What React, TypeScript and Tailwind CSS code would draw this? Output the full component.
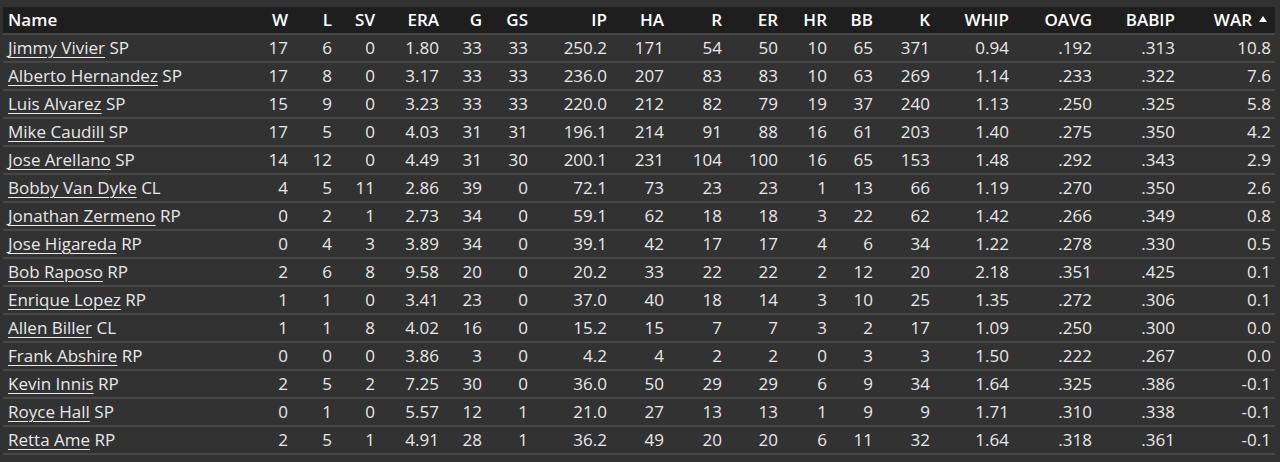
type Row = {
  name: string;
  pos: string;
  stats: string[];
};

const headers = ["W", "L", "SV", "ERA", "G", "GS", "IP", "HA", "R", "ER", "HR", "BB", "K", "WHIP", "OAVG", "BABIP", "WAR"];
const widths = [
  "w-[44px]", "w-[44px]", "w-[43px]", "w-[64px]", "w-[43px]", "w-[46px]", "w-[79px]", "w-[57px]", "w-[58px]",
  "w-[56px]", "w-[49px]", "w-[46px]", "w-[57px]", "w-[79px]", "w-[83px]", "w-[83px]", "w-[96px]",
];

const rows: Row[] = [
  { name: "Jimmy Vivier", pos: "SP", stats: ["17", "6", "0", "1.80", "33", "33", "250.2", "171", "54", "50", "10", "65", "371", "0.94", ".192", ".313", "10.8"] },
  { name: "Alberto Hernandez", pos: "SP", stats: ["17", "8", "0", "3.17", "33", "33", "236.0", "207", "83", "83", "10", "63", "269", "1.14", ".233", ".322", "7.6"] },
  { name: "Luis Alvarez", pos: "SP", stats: ["15", "9", "0", "3.23", "33", "33", "220.0", "212", "82", "79", "19", "37", "240", "1.13", ".250", ".325", "5.8"] },
  { name: "Mike Caudill", pos: "SP", stats: ["17", "5", "0", "4.03", "31", "31", "196.1", "214", "91", "88", "16", "61", "203", "1.40", ".275", ".350", "4.2"] },
  { name: "Jose Arellano", pos: "SP", stats: ["14", "12", "0", "4.49", "31", "30", "200.1", "231", "104", "100", "16", "65", "153", "1.48", ".292", ".343", "2.9"] },
  { name: "Bobby Van Dyke", pos: "CL", stats: ["4", "5", "11", "2.86", "39", "0", "72.1", "73", "23", "23", "1", "13", "66", "1.19", ".270", ".350", "2.6"] },
  { name: "Jonathan Zermeno", pos: "RP", stats: ["0", "2", "1", "2.73", "34", "0", "59.1", "62", "18", "18", "3", "22", "62", "1.42", ".266", ".349", "0.8"] },
  { name: "Jose Higareda", pos: "RP", stats: ["0", "4", "3", "3.89", "34", "0", "39.1", "42", "17", "17", "4", "6", "34", "1.22", ".278", ".330", "0.5"] },
  { name: "Bob Raposo", pos: "RP", stats: ["2", "6", "8", "9.58", "20", "0", "20.2", "33", "22", "22", "2", "12", "20", "2.18", ".351", ".425", "0.1"] },
  { name: "Enrique Lopez", pos: "RP", stats: ["1", "1", "0", "3.41", "23", "0", "37.0", "40", "18", "14", "3", "10", "25", "1.35", ".272", ".306", "0.1"] },
  { name: "Allen Biller", pos: "CL", stats: ["1", "1", "8", "4.02", "16", "0", "15.2", "15", "7", "7", "3", "2", "17", "1.09", ".250", ".300", "0.0"] },
  { name: "Frank Abshire", pos: "RP", stats: ["0", "0", "0", "3.86", "3", "0", "4.2", "4", "2", "2", "0", "3", "3", "1.50", ".222", ".267", "0.0"] },
  { name: "Kevin Innis", pos: "RP", stats: ["2", "5", "2", "7.25", "30", "0", "36.0", "50", "29", "29", "6", "9", "34", "1.64", ".325", ".386", "-0.1"] },
  { name: "Royce Hall", pos: "SP", stats: ["0", "1", "0", "5.57", "12", "1", "21.0", "27", "13", "13", "1", "9", "9", "1.71", ".310", ".338", "-0.1"] },
  { name: "Retta Ame", pos: "RP", stats: ["2", "5", "1", "4.91", "28", "1", "36.2", "49", "20", "20", "6", "11", "32", "1.64", ".318", ".361", "-0.1"] },
];

export default function App() {
  return (
    <div className="min-h-[462px] bg-[#323232] px-[3px] pt-[7px] font-['Open_Sans',sans-serif] text-[17px] text-[#e8e8e8]">
      <table className="w-[1272px] table-fixed border-collapse">
        <colgroup>
          <col className="w-[245px]" />
          {widths.map((w, i) => (
            <col key={`col-${i}`} className={w} />
          ))}
        </colgroup>
        <thead>
          <tr className="h-[26px] bg-[#1e1e1e] border-b-2 border-[#474747]">
            <th className="pl-[5px] text-left font-semibold text-white">Name</th>
            {headers.map((h) => (
              <th key={`h-${h}`} className="pr-[4px] text-right font-semibold text-white whitespace-nowrap">
                {h === "WAR" ? (
                  <span className="inline-flex items-center gap-[7px]">
                    WAR
                    <svg width="8" height="6" viewBox="0 0 8 6" className="mr-[4px] mb-[1px]">
                      <path d="M4 0 L8 6 L0 6 Z" fill="#ffffff" />
                    </svg>
                  </span>
                ) : (
                  h
                )}
              </th>
            ))}
          </tr>
        </thead>
        <tbody>
          {rows.map((r) => (
            <tr key={`row-${r.name}`} className="h-[28px] border-b-2 border-[#474747]">
              <td className="pl-[5px] text-left whitespace-nowrap">
                <a href="#" className="underline underline-offset-[3px] decoration-1">
                  {r.name}
                </a>{" "}
                {r.pos}
              </td>
              {r.stats.map((s, i) => (
                <td key={`s-${i}`} className="pr-[4px] text-right">
                  {s}
                </td>
              ))}
            </tr>
          ))}
        </tbody>
      </table>
    </div>
  );
}
